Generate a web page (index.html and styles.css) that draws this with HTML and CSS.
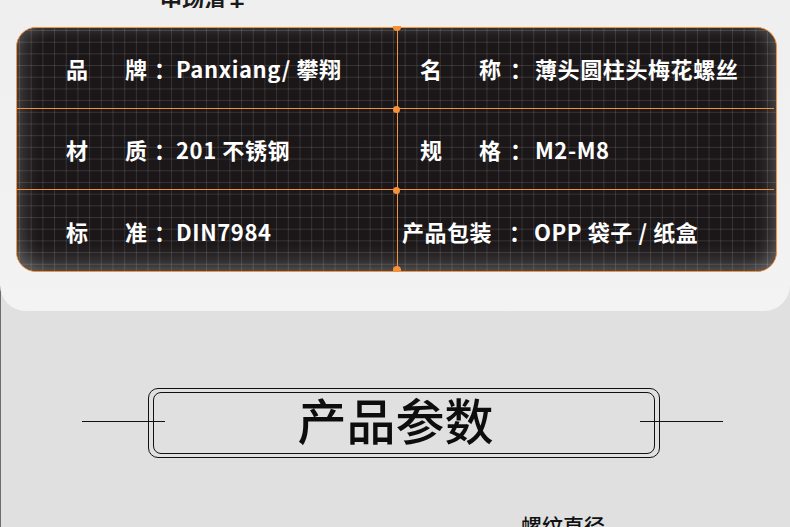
FILE: index.html
```html
<!DOCTYPE html>
<html lang="zh">
<head>
<meta charset="utf-8">
<link rel="stylesheet" href="styles.css">
</head>
<body>
<div class="panel">
  <div class="heading"><span>中场清全</span></div>
  <div class="card">
    <div class="cell">
      <span class="label"><span>品</span><span>牌</span></span><span class="colon">：</span><span class="value">Panxiang/ 攀翔</span>
    </div>
    <div class="cell right">
      <span class="label"><span>名</span><span>称</span></span><span class="colon">：</span><span class="value">薄头圆柱头梅花螺丝</span>
    </div>
    <div class="cell">
      <span class="label"><span>材</span><span>质</span></span><span class="colon">：</span><span class="value">201 不锈钢</span>
    </div>
    <div class="cell right">
      <span class="label"><span>规</span><span>格</span></span><span class="colon">：</span><span class="value">M2-M8</span>
    </div>
    <div class="cell last">
      <span class="label"><span>标</span><span>准</span></span><span class="colon">：</span><span class="value">DIN7984</span>
    </div>
    <div class="cell right last">
      <span class="label wide">产品包装</span><span class="colon">：</span><span class="value">OPP 袋子 / 纸盒</span>
    </div>
    <i class="dot d-top"></i>
    <i class="dot d-m1"></i>
    <i class="dot d-m2"></i>
    <i class="dot d-bot"></i>
  </div>
</div>
<div class="lower">
  <div class="title-row">
    <span class="rule rule-left"></span>
    <div class="title-box">
      <div class="title-inner">产品参数</div>
    </div>
    <span class="rule rule-right"></span>
  </div>
  <div class="sub">螺纹直径</div>
</div>
</body>
</html>
```
FILE: styles.css
```css
* { box-sizing: border-box; }
html, body { margin: 0; padding: 0; }
body {
  width: 790px;
  height: 527px;
  overflow: hidden;
  font-family: "Noto Sans CJK SC", "Noto Sans", sans-serif;
  background: linear-gradient(#eeeeee 0 285px, #e0e0e0 285px);
}
.panel {
  position: relative;
  z-index: 2;
  height: 311px;
  background: linear-gradient(180deg, #efefef 0%, #f3f3f3 100%);
  border-radius: 0 0 26px 26px;
  overflow: hidden;
}
.heading {
  height: 8px;
  overflow: hidden;
  display: flex;
  align-items: flex-end;
  padding-left: 160px;
  margin-bottom: 19px;
}
.heading span {
  font-size: 22px;
  line-height: 22px;
  font-weight: 700;
  color: #1a1a1a;
  flex: none;
  margin-bottom: -1px;
}
.card {
  position: relative;
  margin: 0 13px 0 16px;
  height: 245px;
  border: 1px solid #f4913d;
  border-radius: 20px;
  background-color: #1b1718;
  background-image:
    linear-gradient(90deg, rgba(255,255,255,0.12) 1px, transparent 1px),
    linear-gradient(180deg, rgba(255,255,255,0.12) 1px, transparent 1px);
  background-size: 11.7px 11.7px;
  background-position: 2px 2px;
  box-shadow:
    inset 0 -22px 22px -12px rgba(255,255,255,0.22),
    inset 16px 0 20px -10px rgba(255,255,255,0.2),
    inset -16px 0 20px -10px rgba(255,255,255,0.2),
    inset 0 14px 16px -10px rgba(255,255,255,0.1);
  display: grid;
  grid-template-columns: 380px 1fr;
  grid-template-rows: 81px 81px 1fr;
  color: #fff;
  font-size: 22px;
  font-weight: 700;
}
.cell {
  display: flex;
  align-items: center;
  padding-left: 49px;
  border-bottom: 1px solid #f4913d;
  border-right: 1px solid #f4913d;
  margin-right: -1px;
  white-space: nowrap;
}
.cell.right {
  padding-left: 23px;
  border-right: none;
  margin-right: 2px;
}
.cell.last { border-bottom: none; }
.label {
  display: inline-flex;
  justify-content: space-between;
  width: 81px;
}
.label.wide {
  width: 98px;
  margin-left: -18px;
  justify-content: flex-start;
  letter-spacing: 0.5px;
}
.colon {
  display: inline-block;
  width: 34px;
  padding-left: 6px;
  text-align: center;
}
.cell:not(.right) .colon { width: 29px; padding-left: 7px; }
.value { letter-spacing: 0.6px; }
.dot {
  position: absolute;
  width: 7px;
  height: 7px;
  border-radius: 50%;
  background: #f4913d;
}
.d-top { left: 376px; top: -2px; width: 8px; height: 5px; border-radius: 0 0 4px 4px; }
.d-m1 { left: 376px; top: 78px; }
.d-m2 { left: 376px; top: 159px; }
.d-bot { left: 376px; top: 238px; width: 8px; height: 6px; border-radius: 4px 4px 0 0; }
.lower {
  position: relative;
  z-index: 1;
  margin-top: -26px;
  padding-top: 103px;
  height: 242px;
  border-left: 1px solid #6d6d6d;
}
.title-row {
  display: flex;
  align-items: center;
  margin-left: 81px;
  height: 70px;
}
.rule {
  width: 83px;
  height: 1px;
  background: #111;
  position: relative;
  z-index: 2;
  margin-top: -3px;
}
.rule-left { margin-right: -17px; }
.rule-right { margin-left: -20px; }
.title-box {
  width: 512px;
  height: 70px;
  border: 1px solid #111;
  border-radius: 10px;
  padding: 3px 4px;
}
.title-inner {
  height: 100%;
  border: 1px solid #111;
  border-radius: 8px;
  display: flex;
  align-items: center;
  justify-content: center;
  padding-right: 17px;
  padding-bottom: 10px;
  font-size: 49px;
  font-weight: 500;
  color: #0d0d0d;
  line-height: 1;
}
.sub {
  margin-top: 57px;
  padding-left: 520px;
  font-size: 21px;
  line-height: 21px;
  font-weight: 500;
  color: #111;
}
```
